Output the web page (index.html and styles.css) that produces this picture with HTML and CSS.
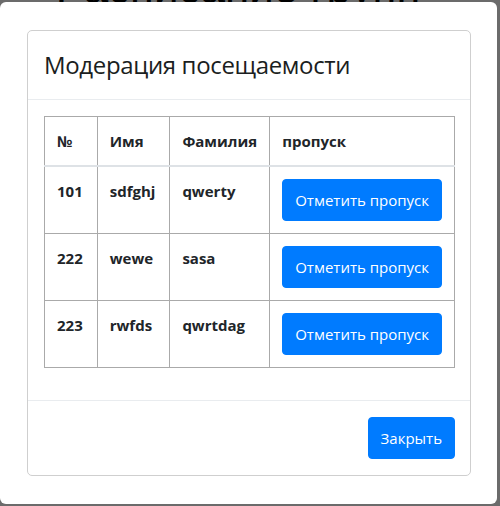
FILE: index.html
```html
<!DOCTYPE html>
<html lang="ru">
<head>
<meta charset="utf-8">
<title>Модерация посещаемости</title>
<link rel="stylesheet" href="styles.css">
</head>
<body>
<div class="page">
  <h1 class="page-title">Расписание групп</h1>
</div>
<div class="backdrop"></div>
<div class="frame">
  <div class="modal-content">
    <div class="modal-header">
      <h4 class="modal-title">Модерация посещаемости</h4>
    </div>
    <div class="modal-body">
      <table class="table">
        <thead>
          <tr>
            <th class="c-num">№</th>
            <th class="c-name">Имя</th>
            <th class="c-surname">Фамилия</th>
            <th class="c-action">пропуск</th>
          </tr>
        </thead>
        <tbody>
          <tr>
            <td>101</td>
            <td>sdfghj</td>
            <td>qwerty</td>
            <td><button class="btn">Отметить пропуск</button></td>
          </tr>
          <tr>
            <td>222</td>
            <td>wewe</td>
            <td>sasa</td>
            <td><button class="btn">Отметить пропуск</button></td>
          </tr>
          <tr>
            <td>223</td>
            <td>rwfds</td>
            <td>qwrtdag</td>
            <td><button class="btn">Отметить пропуск</button></td>
          </tr>
        </tbody>
      </table>
    </div>
    <div class="modal-footer">
      <button class="btn">Закрыть</button>
    </div>
  </div>
</div>
</body>
</html>
```

FILE: styles.css
```css
* { box-sizing: border-box; }

html, body {
  margin: 0;
  padding: 0;
  height: 100%;
  overflow: hidden;
}

body {
  background: #ffffff;
  font-family: "Open Sans", "Noto Sans", sans-serif;
  color: #212529;
}

.page {
  display: flex;
  justify-content: center;
  padding-top: 1px;
}

.page-title {
  margin: -35px 0 0 0;
  font-family: "Liberation Sans", sans-serif;
  font-weight: 400;
  font-size: 44px;
  line-height: 1;
  color: #000;
  padding-right: 24px;
}

.backdrop {
  position: fixed;
  inset: 0;
  background: rgba(0, 0, 0, 0.58);
}

.frame {
  position: fixed;
  left: 0;
  top: 2px;
  width: 497px;
  height: 502px;
  background: #fff;
  border-radius: 6px;
  padding: 28px 26px 0 27px;
}

.modal-content {
  border: 1px solid #cfcfcf;
  border-radius: 5px;
  background: #fff;
  width: 444px;
}

.modal-header {
  padding: 16px 16px;
  border-bottom: 1px solid #e9ecef;
}

.modal-title {
  margin: 0;
  font-size: 24px;
  font-weight: 400;
  line-height: 36px;
  letter-spacing: -0.35px;
  color: #1b1e21;
}

.modal-body {
  padding: 16px 16px;
}

.table {
  width: 411px;
  border-collapse: collapse;
  margin-bottom: 16px;
  font-size: 15px;
}

.table th,
.table td {
  border: 1px solid #aaaaaa;
  padding: 12px 12px;
  text-align: left;
  vertical-align: top;
  font-weight: 700;
  line-height: 24px;
}

.table thead th {
  border-bottom: 2px solid #dee2e6;
}

.c-num { width: 53px; }
.c-name { width: 73px; }
.c-surname { width: 99px; }

.btn {
  display: inline-block;
  font-family: inherit;
  font-size: 15px;
  font-weight: 400;
  line-height: 24px;
  color: #fff;
  background: #007bff;
  border: 1px solid #007bff;
  border-radius: 4px;
  padding: 8px 12px;
  white-space: nowrap;
}

.modal-footer {
  display: flex;
  justify-content: flex-end;
  padding: 16px 15px;
  border-top: 1px solid #e9ecef;
}
```
